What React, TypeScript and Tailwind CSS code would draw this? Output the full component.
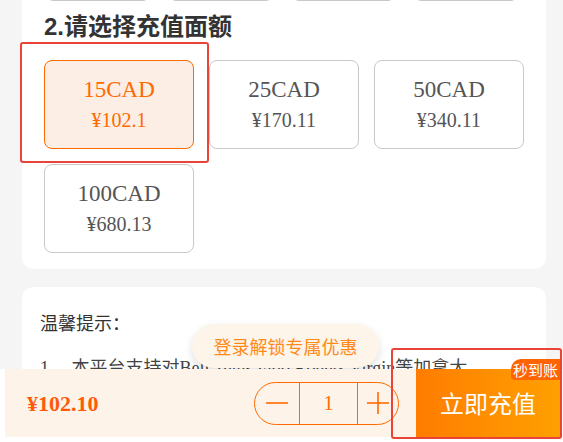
import { useState } from 'react';

const amounts = [
  { cad: '15CAD', cny: '¥102.1' },
  { cad: '25CAD', cny: '¥170.11' },
  { cad: '50CAD', cny: '¥340.11' },
  { cad: '100CAD', cny: '¥680.13' },
];

export default function App() {
  const [selected, setSelected] = useState(0);
  const [qty, setQty] = useState(1);

  return (
    <div className="relative w-[563px] h-[442px] overflow-hidden bg-white font-['Liberation_Serif','Noto_Sans_CJK_SC',serif]">
      <div className="h-full bg-[#f5f5f5] pl-[22px] pr-[17px]">
        {/* 面额卡片 */}
        <div className="bg-white rounded-b-[12px] px-[22px] pb-[16px]">
          {/* 上一节的选项（只露出底边） */}
          <div className="h-[1px] overflow-hidden flex items-end">
            <div className="ml-[3px] w-[470px] grid grid-cols-4 gap-[21px]">
              {[0, 1, 2, 3].map(i => (
                <div key={i} className="h-[40px] -mt-[39px] rounded-[6px] border border-[#c8c8c8]" />
              ))}
            </div>
          </div>

          <h2 className="mt-[10px] h-[32px] leading-[32px] text-[24px] font-bold text-[#333] font-['Liberation_Sans','Noto_Sans_CJK_SC',sans-serif]">
            2.请选择充值面额
          </h2>

          <div className="mt-[17px] grid grid-cols-3 gap-[15px]">
            {amounts.map((a, i) => (
              <button
                key={a.cad}
                onClick={() => setSelected(i)}
                className={`h-[89px] rounded-[8px] border flex flex-col items-center justify-center ${
                  selected === i
                    ? 'bg-[#fdeee5] border-[#ff6a00] text-[#ff6a00]'
                    : 'bg-white border-[#c9c9c9] text-[#555]'
                }`}
              >
                <span className="text-[23px] leading-[30px]">{a.cad}</span>
                <span className="text-[20px] leading-[30px]">{a.cny}</span>
              </button>
            ))}
          </div>
        </div>

        {/* 温馨提示 */}
        <div className="mt-[18px] bg-white rounded-[12px] h-[200px] pl-[18px] pt-[24px] overflow-hidden">
          <div className="text-[18px] leading-[26px] text-[#333]">温馨提示：</div>
          <div className="mt-[18px] text-[18px] leading-[26px] text-[#444] whitespace-nowrap">
            1、 本平台支持对Bell Telus Fido Rogers Virgin等加拿大
          </div>
        </div>
      </div>

      {/* 登录提示 */}
      <div className="absolute left-[192px] top-[324px] w-[187px] h-[44px] rounded-full bg-[#fdf4ea] shadow-[0_4px_10px_rgba(0,0,0,0.12)] flex items-center justify-center text-[18px] text-[#ff8a1a] font-['Noto_Sans_CJK_SC',sans-serif]">
        登录解锁专属优惠
      </div>

      {/* 底部栏 */}
      <div className="absolute left-0 right-0 bottom-0 bg-white pl-[5px] pr-[3px] pb-[5px]">
        <div className="h-[68px] bg-[#fdf3e8] flex items-center">
          <div className="pl-[22px] text-[22px] font-bold text-[#ff5a0a]">¥102.10</div>
          <div className="ml-auto mr-[17px] h-[43px] w-[145px] rounded-full border border-[#ff6a00] flex items-stretch text-[#ff6a00]">
            <button onClick={() => setQty(q => Math.max(1, q - 1))} className="w-[44px] flex items-center justify-center">
              <svg width="22" height="22" viewBox="0 0 22 22">
                <line x1="0" y1="11" x2="22" y2="11" stroke="#ff6a00" strokeWidth="1.6" />
              </svg>
            </button>
            <div className="w-[59px] border-x border-[#ff6a00] flex items-center justify-center text-[20px]">{qty}</div>
            <button onClick={() => setQty(q => q + 1)} className="flex-1 flex items-center justify-center">
              <svg width="22" height="22" viewBox="0 0 22 22">
                <line x1="0" y1="11" x2="22" y2="11" stroke="#ff6a00" strokeWidth="1.6" />
                <line x1="11" y1="0" x2="11" y2="22" stroke="#ff6a00" strokeWidth="1.6" />
              </svg>
            </button>
          </div>
          <button className="relative w-[144px] h-full bg-gradient-to-r from-[#ff7c00] to-[#ffa000] text-white text-[24px] font-['Noto_Sans_CJK_SC',sans-serif] flex items-center justify-center">
            立即充值
            <span className="absolute right-0 -top-[10px] w-[49px] h-[21px] rounded-tl-[10px] rounded-bl-[4px] bg-[#ff6400] text-[15px] leading-[21px] text-white text-center">
              秒到账
            </span>
          </button>
        </div>
      </div>

      {/* 标注框 */}
      <div className="absolute left-[20px] top-[42px] w-[189px] h-[121px] rounded-[3px] border-[2.5px] border-[#ea4438] pointer-events-none" />
      <div className="absolute left-[391px] top-[348px] w-[171px] h-[91px] rounded-[3px] border-[2.5px] border-[#ea4438] pointer-events-none" />
    </div>
  );
}
